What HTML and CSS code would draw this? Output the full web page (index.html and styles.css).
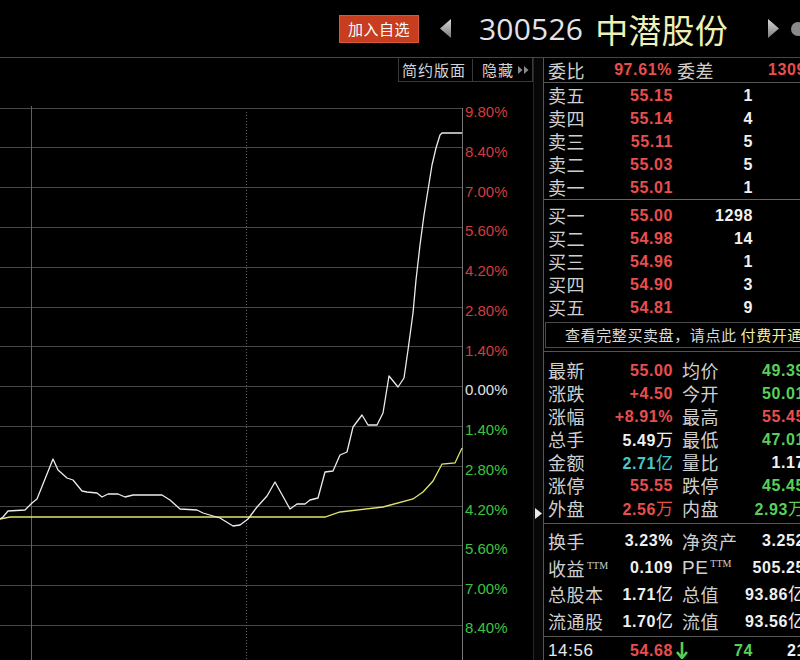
FILE: index.html
```html
<!DOCTYPE html>
<html lang="zh-CN">
<head>
<meta charset="utf-8">
<title>300526 中潜股份</title>
<link rel="stylesheet" href="styles.css">
</head>
<body>
<div class="screen">
  <header class="topbar">
    <button class="add-btn">加入自选</button>
    <svg class="nav-arrow nav-left" width="11" height="19" viewBox="0 0 11 19">
      <defs>
        <linearGradient id="ag" x1="0" y1="0" x2="0" y2="1">
          <stop offset="0" stop-color="#d8d8d8"/>
          <stop offset="1" stop-color="#7a7a7a"/>
        </linearGradient>
      </defs>
      <polygon points="11,0 11,19 0,9.5" fill="url(#ag)"/>
    </svg>
    <span class="code">300526</span>
    <span class="name">中潜股份</span>
    <svg class="nav-arrow nav-right" width="11" height="19" viewBox="0 0 11 19">
      <polygon points="0,0 0,19 11,9.5" fill="url(#ag)"/>
    </svg>
    <span class="edge-icon"></span>
  </header>

  <div class="main">
    <section class="chart-area">
      <div class="toolbar">
        <div class="tb-box">
          <span class="tb-item">简约版面</span>
          <span class="tb-sep"></span>
          <span class="tb-item">隐藏</span>
          <svg class="tb-more" width="11" height="8" viewBox="0 0 11 8">
            <polygon points="0,0 4.5,4 0,8" fill="#8a8a8a"/>
            <polygon points="6,0 10.5,4 6,8" fill="#8a8a8a"/>
          </svg>
        </div>
      </div>
      <svg class="chart" width="533" height="560" viewBox="0 100 533 560">
        <g class="grid" stroke="#474747" stroke-width="1" shape-rendering="crispEdges">
          <line x1="0" y1="108.5" x2="462" y2="108.5"/>
          <line x1="0" y1="147.5" x2="462" y2="147.5"/>
          <line x1="0" y1="187.5" x2="462" y2="187.5"/>
          <line x1="0" y1="227.5" x2="462" y2="227.5"/>
          <line x1="0" y1="267.5" x2="462" y2="267.5"/>
          <line x1="0" y1="307.5" x2="462" y2="307.5"/>
          <line x1="0" y1="346.5" x2="462" y2="346.5"/>
          <line x1="0" y1="386.5" x2="462" y2="386.5"/>
          <line x1="0" y1="426.5" x2="462" y2="426.5"/>
          <line x1="0" y1="466.5" x2="462" y2="466.5"/>
          <line x1="0" y1="506.5" x2="462" y2="506.5"/>
          <line x1="0" y1="545.5" x2="462" y2="545.5"/>
          <line x1="0" y1="585.5" x2="462" y2="585.5"/>
          <line x1="0" y1="625.5" x2="462" y2="625.5"/>
        </g>
        <line x1="31.5" y1="106" x2="31.5" y2="660" stroke="#606060" stroke-width="1" shape-rendering="crispEdges"/>
        <line x1="246.5" y1="112" x2="246.5" y2="660" stroke="#666" stroke-width="1" stroke-dasharray="1 2" shape-rendering="crispEdges"/>
        <line x1="462.5" y1="108" x2="462.5" y2="660" stroke="#777" stroke-width="1" shape-rendering="crispEdges"/>

        <polyline fill="none" stroke="#e4e46a" stroke-width="1.3" points="0,519 10,517 117,517 325,517 340,512 383,507 413,499 423,492 433,481 442,464 455,463 462,448"/>
        <polyline fill="none" stroke="#ececec" stroke-width="1.3" stroke-linejoin="round" points="0,519 3,517 8,511 25,510 32,503 37,499 53,459 58,470 67,478 73,480 82,491 87,492 97,493 102,497 108,494 118,494 125,497 133,495 162,495 170,500 180,509 197,510 203,513 220,518 233,526 240,525 248,519 257,507 267,496 275,482 290,509 297,504 305,504 310,500 318,498 325,472 333,471 340,455 347,452 353,427 362,415 368,425 377,425 383,413 389,376 398,387 404,378 408,350 413,313 416,280 420,245 424,215 428,190 432,165 436,148 440,135 442,133 462,133"/>

        <g class="axis">
          <text x="465" y="117" class="ax-up">9.80%</text>
          <text x="465" y="157" class="ax-up">8.40%</text>
          <text x="465" y="196.5" class="ax-up">7.00%</text>
          <text x="465" y="236" class="ax-up">5.60%</text>
          <text x="465" y="276" class="ax-up">4.20%</text>
          <text x="465" y="316" class="ax-up">2.80%</text>
          <text x="465" y="355.5" class="ax-up">1.40%</text>
          <text x="465" y="395" class="ax-zero">0.00%</text>
          <text x="465" y="435" class="ax-down">1.40%</text>
          <text x="465" y="475" class="ax-down">2.80%</text>
          <text x="465" y="514.5" class="ax-down">4.20%</text>
          <text x="465" y="554" class="ax-down">5.60%</text>
          <text x="465" y="594" class="ax-down">7.00%</text>
          <text x="465" y="633" class="ax-down">8.40%</text>
        </g>
      </svg>
    </section>

    <div class="splitter">
      <svg class="split-arrow" width="7" height="11" viewBox="0 0 7 11">
        <polygon points="0,0 7,5.5 0,11" fill="#e8e8e8"/>
      </svg>
    </div>

    <aside class="quote">
      <div class="sec sec-ratio">
        <div class="row">
          <div class="cell-a cell-a-ratio"><span class="lbl">委比</span><span class="val up">97.61%</span></div>
          <div class="cell-c cell-c-ratio"><span class="lbl">委差</span><span class="val up">1309</span></div>
        </div>
      </div>

      <div class="sec sec-sell">
        <div class="row"><div class="cell-a"><span class="lbl">卖五</span><span class="val up">55.15</span></div><div class="cell-b val">1</div></div>
        <div class="row"><div class="cell-a"><span class="lbl">卖四</span><span class="val up">55.14</span></div><div class="cell-b val">4</div></div>
        <div class="row"><div class="cell-a"><span class="lbl">卖三</span><span class="val up">55.11</span></div><div class="cell-b val">5</div></div>
        <div class="row"><div class="cell-a"><span class="lbl">卖二</span><span class="val up">55.03</span></div><div class="cell-b val">5</div></div>
        <div class="row"><div class="cell-a"><span class="lbl">卖一</span><span class="val up">55.01</span></div><div class="cell-b val">1</div></div>
      </div>

      <div class="sec sec-buy">
        <div class="row"><div class="cell-a"><span class="lbl">买一</span><span class="val up">55.00</span></div><div class="cell-b val">1298</div></div>
        <div class="row"><div class="cell-a"><span class="lbl">买二</span><span class="val up">54.98</span></div><div class="cell-b val">14</div></div>
        <div class="row"><div class="cell-a"><span class="lbl">买三</span><span class="val up">54.96</span></div><div class="cell-b val">1</div></div>
        <div class="row"><div class="cell-a"><span class="lbl">买四</span><span class="val up">54.90</span></div><div class="cell-b val">3</div></div>
        <div class="row"><div class="cell-a"><span class="lbl">买五</span><span class="val up">54.81</span></div><div class="cell-b val">9</div></div>
        <div class="full-book">查看完整买卖盘，请点此 <span class="pay">付费开通</span></div>
      </div>

      <div class="sec sec-stats">
        <div class="row"><div class="cell-a"><span class="lbl">最新</span><span class="val up">55.00</span></div><div class="cell-c"><span class="lbl">均价</span><span class="val down">49.39</span></div></div>
        <div class="row"><div class="cell-a"><span class="lbl">涨跌</span><span class="val up">+4.50</span></div><div class="cell-c"><span class="lbl">今开</span><span class="val down">50.01</span></div></div>
        <div class="row"><div class="cell-a"><span class="lbl">涨幅</span><span class="val up">+8.91%</span></div><div class="cell-c"><span class="lbl">最高</span><span class="val up">55.45</span></div></div>
        <div class="row"><div class="cell-a"><span class="lbl">总手</span><span class="val">5.49<span class="unit">万</span></span></div><div class="cell-c"><span class="lbl">最低</span><span class="val down">47.01</span></div></div>
        <div class="row"><div class="cell-a"><span class="lbl">金额</span><span class="val cyan">2.71<span class="unit">亿</span></span></div><div class="cell-c"><span class="lbl">量比</span><span class="val">1.17</span></div></div>
        <div class="row"><div class="cell-a"><span class="lbl">涨停</span><span class="val up">55.55</span></div><div class="cell-c"><span class="lbl">跌停</span><span class="val down">45.45</span></div></div>
        <div class="row"><div class="cell-a"><span class="lbl">外盘</span><span class="val up">2.56<span class="unit">万</span></span></div><div class="cell-c"><span class="lbl">内盘</span><span class="val down">2.93<span class="unit">万</span></span></div></div>
      </div>

      <div class="sec sec-fund">
        <div class="row row-tall"><div class="cell-a"><span class="lbl">换手</span><span class="val">3.23%</span></div><div class="cell-c"><span class="lbl">净资产</span><span class="val">3.252</span></div></div>
        <div class="row row-tall"><div class="cell-a"><span class="lbl">收益<sup class="ttm">TTM</sup></span><span class="val">0.109</span></div><div class="cell-c"><span class="lbl lbl-pe">PE<sup class="ttm">TTM</sup></span><span class="val">505.25</span></div></div>
        <div class="row row-tall"><div class="cell-a"><span class="lbl">总股本</span><span class="val">1.71<span class="unit">亿</span></span></div><div class="cell-c"><span class="lbl">总值</span><span class="val">93.86<span class="unit">亿</span></span></div></div>
        <div class="row row-tall"><div class="cell-a"><span class="lbl">流通股</span><span class="val">1.70<span class="unit">亿</span></span></div><div class="cell-c"><span class="lbl">流值</span><span class="val">93.56<span class="unit">亿</span></span></div></div>
      </div>

      <div class="sec sec-tick">
        <div class="row">
          <div class="cell-a"><span class="val time">14:56</span><span class="val up">54.68</span></div>
          <svg class="tick-arrow" width="12" height="17" viewBox="0 0 12 17">
            <line x1="6" y1="0" x2="6" y2="15" stroke="#52d052" stroke-width="2.6"/>
            <polyline points="1,10 6,16 11,10" fill="none" stroke="#52d052" stroke-width="2.6"/>
          </svg>
          <div class="cell-vol val down">74</div>
          <div class="cell-last val">21</div>
        </div>
      </div>
    </aside>
  </div>
</div>
</body>
</html>
```

FILE: styles.css
```css
html, body {
  margin: 0;
  padding: 0;
  background: #000;
  overflow: hidden;
}

.screen {
  width: 800px;
  height: 660px;
  display: flex;
  flex-direction: column;
  background: #000;
  font-family: "Noto Sans CJK SC", "Liberation Sans", sans-serif;
  overflow: hidden;
}

/* ---------- header ---------- */
.topbar {
  height: 57px;
  flex: none;
  border-bottom: 1px solid #464646;
  display: flex;
  align-items: center;
  padding-left: 339px;
  box-sizing: content-box;
  white-space: nowrap;
  overflow: hidden;
}

.topbar > * {
  flex: none;
}

.add-btn {
  width: 80px;
  height: 28px;
  margin: 0;
  padding: 0;
  background: #c63d1f;
  border: 1px solid #d9583a;
  color: #fff;
  font-family: "Noto Sans CJK SC", sans-serif;
  font-size: 15px;
  line-height: 26px;
  letter-spacing: 0.5px;
}

.nav-arrow {
  display: block;
}

.nav-left {
  margin-left: 21px;
}

.code {
  margin-left: 28px;
  font-family: "Open Sans", "Liberation Sans", sans-serif;
  font-size: 30px;
  color: #e2e3ec;
  line-height: 40px;
  letter-spacing: 0.2px;
}

.name {
  margin-left: 12px;
  font-family: "Noto Sans CJK SC", sans-serif;
  font-size: 33px;
  line-height: 40px;
  color: #eef0b6;
  letter-spacing: 0.2px;
}

.nav-right {
  margin-left: 40px;
}

.edge-icon {
  width: 14px;
  height: 14px;
  margin-left: 12px;
  border-radius: 50%;
  background: #8a8a8a;
}

/* ---------- main ---------- */
.main {
  display: flex;
  height: 602px;
}

.chart-area {
  width: 533px;
  flex: none;
  display: flex;
  flex-direction: column;
}

.toolbar {
  height: 42px;
  flex: none;
  display: flex;
  justify-content: flex-end;
  align-items: flex-start;
}

.tb-box {
  display: flex;
  align-items: center;
  height: 24px;
  box-sizing: border-box;
  width: 135px;
  border: 1px solid #3a3a3a;
  border-top: none;
  padding-left: 3px;
  color: #d4d4d4;
  font-size: 15px;
  letter-spacing: 1px;
  white-space: nowrap;
}

.tb-item {
  line-height: 22px;
}

.tb-sep {
  width: 1px;
  height: 22px;
  background: #3a3a3a;
  margin: 0 9px 0 6px;
}

.tb-more {
  display: block;
  margin-left: 4px;
}

.chart {
  display: block;
  flex: none;
}

.axis text {
  font-family: "Liberation Sans", Arial, sans-serif;
  font-size: 15px;
}

.ax-up { fill: #d43c3c; }
.ax-zero { fill: #e2e2e2; }
.ax-down { fill: #3ec43e; }

.splitter {
  width: 10px;
  flex: none;
  box-sizing: border-box;
  border-left: 1px solid #262626;
  background: #070707;
  padding-top: 450px;
  padding-left: 1px;
}

.split-arrow {
  display: block;
}

/* ---------- quote panel ---------- */
.quote {
  width: 257px;
  flex: none;
  box-sizing: border-box;
  border-left: 1px solid #555;
  overflow: hidden;
  white-space: nowrap;
}

.sec {
  width: 280px;
}

.row {
  display: flex;
  height: 23px;
  line-height: 23px;
  padding-left: 4px;
  align-items: center;
}

.row-tall {
  height: 26.5px;
  line-height: 26.5px;
}

.cell-a {
  width: 125px;
  flex: none;
  display: flex;
  justify-content: space-between;
  align-items: center;
}

.cell-a-ratio {
  width: 124px;
}

.cell-b {
  width: 80px;
  flex: none;
  text-align: right;
}

.cell-c {
  width: 123px;
  flex: none;
  margin-left: 9px;
  display: flex;
  justify-content: space-between;
  align-items: center;
}

.cell-c-ratio {
  margin-left: 5px;
  width: 129px;
}

.lbl {
  font-family: "Noto Sans CJK SC", sans-serif;
  font-size: 18px;
  letter-spacing: 0.5px;
  color: #cfcfcf;
}

.lbl-pe {
  font-family: "Liberation Sans", sans-serif;
  font-size: 19px;
}

.ttm {
  font-family: "Liberation Serif", serif;
  font-size: 10px;
  letter-spacing: 0;
  vertical-align: 7px;
  line-height: 0;
  margin-left: 2px;
  color: #cfcfcf;
}

.val {
  font-family: "Liberation Sans", Arial, "Noto Sans CJK SC", sans-serif;
  font-weight: bold;
  font-size: 16px;
  letter-spacing: 0.6px;
  color: #f0f0f0;
}

.unit {
  font-family: "Noto Sans CJK SC", sans-serif;
  font-weight: normal;
  font-size: 17px;
  letter-spacing: 0;
}

.up { color: #e84e4e; }
.down { color: #58d058; }
.cyan { color: #48c8c8; }

.sec-ratio {
  height: 24px;
  border-bottom: 1px solid #555;
}

.sec-ratio .row {
  height: 24px;
  line-height: 24px;
}

.sec-sell {
  padding-top: 1px;
  border-bottom: 1px solid #666;
}

.sec-buy {
  padding-top: 4px;
}

.full-book {
  margin-top: 3px;
  margin-left: 1px;
  height: 26px;
  box-sizing: border-box;
  border: 1px solid #4a4a4a;
  padding-left: 19px;
  font-size: 15px;
  line-height: 24px;
  letter-spacing: 0.6px;
  color: #dadada;
}

.pay {
  color: #f0f0a4;
}

.sec-stats {
  margin-top: 3px;
  border-top: 1px solid #555;
  padding-top: 7px;
  padding-bottom: 3px;
  border-bottom: 1px solid #555;
}

.sec-fund {
  padding-top: 4px;
  padding-bottom: 2px;
  border-bottom: 1px solid #555;
}

.sec-tick {
  padding-top: 2px;
}

.time {
  font-weight: normal;
  font-size: 17px;
  color: #e8e8e8;
}

.tick-arrow {
  display: block;
  flex: none;
  margin-left: 3px;
}

.cell-vol {
  width: 65px;
  flex: none;
  text-align: right;
}

.cell-last {
  margin-left: 34px;
}
```
